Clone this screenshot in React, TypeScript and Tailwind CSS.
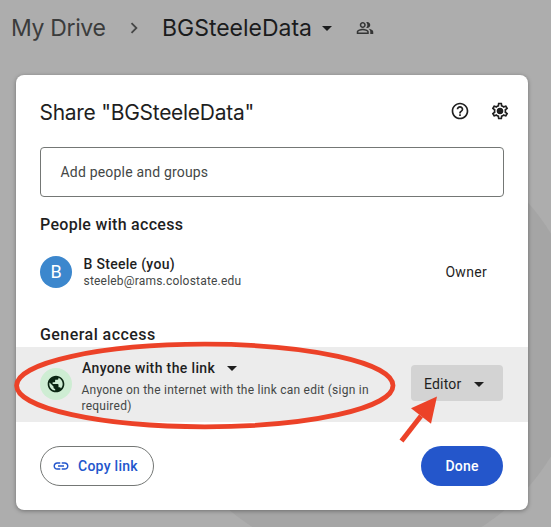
import {
  MdArrowDropDown,
  MdChevronRight,
  MdHelpOutline,
  MdLink,
  MdOutlinePeopleAlt,
  MdOutlineSettings,
  MdPublic,
} from "react-icons/md";

function Breadcrumbs() {
  return (
    <header className="flex h-[75px] items-start pl-[11px] pt-[11px] font-['Inter',sans-serif]">
      <div className="flex h-[34px] items-center whitespace-nowrap text-[23px] leading-[34px] text-[#1b1c1d]">
        <span className="w-[95px] tracking-[-0.35px] text-[#3b3c3c]">My Drive</span>
        <MdChevronRight className="ml-[17px] size-[22px] shrink-0 text-[#464747]" />
        <span className="ml-[17px] w-[151px] tracking-[-0.02px]">BGSteeleData</span>
        <MdArrowDropDown className="ml-[2px] size-6 shrink-0" />
        <MdOutlinePeopleAlt className="ml-[17px] size-[18px] shrink-0 text-[#343535]" />
      </div>
    </header>
  );
}

function DialogTitle() {
  return (
    <div className="flex h-[72px] items-center pl-6 pr-[18px] text-[#1f1f1f]">
      <h1 className="-ml-[0.5px] flex-1 whitespace-nowrap pt-[3px] font-['Inter',sans-serif] text-[21px] tracking-[-0.28px]">
        Share "BGSteeleData"
      </h1>
      <MdHelpOutline className="size-5" />
      <span className="relative ml-5 size-5">
        <MdOutlineSettings className="size-5" />
        <span className="absolute left-[7px] top-[7px] size-1.5 rounded-full bg-[#1f1f1f]" />
      </span>
    </div>
  );
}

function OwnerRow() {
  return (
    <div className="mt-[15px] flex h-10 items-center pl-6 pr-[41px]">
      <div className="flex size-8 items-center justify-center rounded-full bg-[#3c87cd] text-lg text-white">
        B
      </div>
      <div className="ml-[11.5px] mt-px flex-1">
        <div className="text-sm font-medium leading-[18px] tracking-[0.3px]">B Steele (you)</div>
        <div className="text-xs leading-[17px] tracking-[0.2px] text-[#444746]">
          steeleb@rams.colostate.edu
        </div>
      </div>
      <span className="text-sm tracking-[0.3px]">Owner</span>
    </div>
  );
}

function GeneralAccessRow() {
  return (
    <div className="relative flex h-[75px] bg-[#ececec] pl-6 pr-[25px]">
      <div className="mt-[21px] flex size-8 shrink-0 items-center justify-center rounded-full bg-[#ceedd3] text-[#0b2613]">
        <MdPublic className="size-5" />
      </div>
      <div className="ml-[10px] mt-[9px] w-[300px]">
        <div className="flex h-6 items-center text-sm font-medium tracking-[0.36px]">
          Anyone with the link
          <MdArrowDropDown className="ml-[5px] size-6" />
        </div>
        <p className="mt-[2px] -ml-[0.5px] text-xs leading-4 tracking-[0.24px] text-[#444746]">
          Anyone on the internet with the link can edit (sign in
          <br />
          required)
        </p>
      </div>
      <button className="ml-auto mt-[18px] flex h-9 w-[92px] shrink-0 items-center rounded bg-[#d3d3d3] pl-[13px] pt-px text-sm tracking-[0.2px]">
        Editor
        <MdArrowDropDown className="ml-[5px] size-6" />
      </button>
      <svg
        className="pointer-events-none absolute -left-4 -top-[347px] h-[527px] w-[551px]"
        viewBox="0 0 551 527"
        fill="none"
      >
        <ellipse cx="204.8" cy="385.5" rx="188.2" ry="41.3" stroke="#ec4228" strokeWidth="4.8" />
        <path d="M401.5 441 L421 416" stroke="#ec4228" strokeWidth="5" />
        <path d="M437 396.5 L411 408.3 L431 423.8 Z" fill="#ec4228" />
      </svg>
    </div>
  );
}

export default function App() {
  return (
    <div className="relative h-[527px] w-[551px] overflow-hidden bg-[#adadad] font-['Roboto',sans-serif] text-[#1f1f1f]">
      <div className="absolute left-[152px] top-[130px] size-[430px] rounded-full bg-[#a5a5a5]" />
      <div className="relative">
        <Breadcrumbs />
        <main className="ml-4 h-[435px] w-[512px] rounded-lg bg-white shadow-[0_1px_4px_rgba(0,0,0,0.35)]">
          <DialogTitle />
          <div className="mx-6 flex h-[50px] w-[464px] items-center rounded border border-[#747775] pl-[19.5px] text-sm tracking-[0.19px] text-[#444746]">
            Add people and groups
          </div>
          <h2 className="mt-4 pl-6 text-base font-medium leading-6 tracking-[0.3px]">
            People with access
          </h2>
          <OwnerRow />
          <h2 className="mt-[31px] pl-6 text-base font-medium leading-6 tracking-[0.45px]">
            General access
          </h2>
          <GeneralAccessRow />
          <footer className="mt-6 flex justify-between pl-6 pr-[25px] text-sm font-medium">
            <button className="flex h-10 w-[114px] items-center rounded-full border border-[#747775] pl-[11px] tracking-[0.27px] text-[#2356cc]">
              <MdLink className="mr-2 size-[18px]" />
              Copy link
            </button>
            <button className="h-10 w-[82px] rounded-full bg-[#2456cb] tracking-[0.2px] text-white">
              Done
            </button>
          </footer>
        </main>
      </div>
    </div>
  );
}
